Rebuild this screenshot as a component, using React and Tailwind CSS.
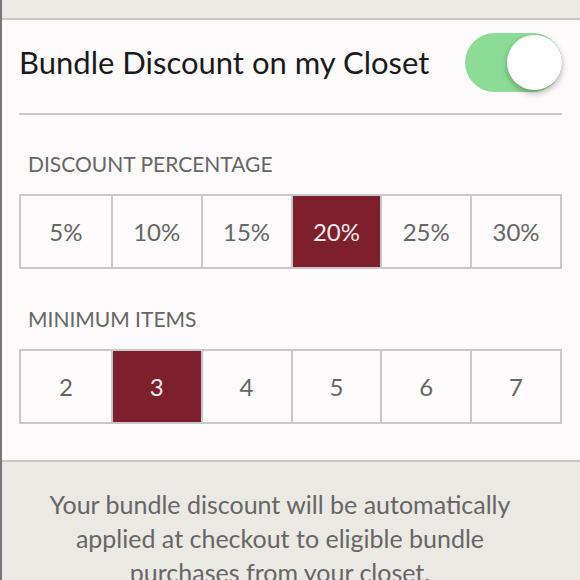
import React, { useState } from 'react';

const percents = ['5%', '10%', '15%', '20%', '25%', '30%'];
const minItems = ['2', '3', '4', '5', '6', '7'];

const OptionRow = ({ options, selected, onSelect }) => (
  <div className="grid grid-cols-6 border-2 border-[#c8c8c8] h-[75px]">
    {options.map((opt, i) => (
      <button
        key={opt}
        onClick={() => onSelect(opt)}
        className={`flex items-center justify-center text-[24px] ${i > 0 ? 'border-l-2 border-[#c8c8c8]' : ''} ${
          selected === opt ? 'bg-[#7e1f2e] text-[#f4e9eb]' : 'bg-[#fcfafa] text-[#666]'
        }`}
      >
        {opt}
      </button>
    ))}
  </div>
);

const App = () => {
  const [enabled, setEnabled] = useState(true);
  const [percent, setPercent] = useState('20%');
  const [items, setItems] = useState('3');

  return (
    <div className="w-[580px] h-[580px] overflow-hidden border-l-2 border-[#777] bg-[#ebe9e4] font-['Lato',sans-serif]">
      <div className="h-[18px]" />

      <div className="border-y-2 border-[#c9c7c2] bg-[#fcfafa] h-[444px] pl-[17px] pr-[18px]">
        {/* header */}
        <div className="flex items-center justify-between pt-[13px] pb-[21px]">
          <span className="text-[31px] text-[#1a1a1a] leading-none">Bundle Discount on my Closet</span>
          <button
            onClick={() => setEnabled(!enabled)}
            className={`relative w-[97px] h-[59px] rounded-full ${enabled ? 'bg-[#8ddc96]' : 'bg-[#e5e5e5]'}`}
          >
            <span
              className={`absolute top-[2px] w-[55px] h-[55px] rounded-full bg-white shadow-[0_3px_6px_rgba(0,0,0,0.3)] ${
                enabled ? 'right-0' : 'left-0'
              }`}
            />
          </button>
        </div>
        <div className="h-[2px] bg-[#c8c8c8]" />

        <div className="pt-[38px] pb-[20px] pl-[9px] text-[21px] text-[#666] leading-none">DISCOUNT PERCENTAGE</div>
        <OptionRow options={percents} selected={percent} onSelect={setPercent} />

        <div className="pt-[39px] pb-[20px] pl-[9px] text-[21px] text-[#666] leading-none">MINIMUM ITEMS</div>
        <OptionRow options={minItems} selected={items} onSelect={setItems} />
      </div>

      <p className="ml-[38px] w-[480px] pt-[25px] text-center text-[25px] leading-[34px] text-[#666]">
        Your bundle discount will be automatically applied at checkout to eligible bundle purchases from your closet.
      </p>
    </div>
  );
};

export default App;
